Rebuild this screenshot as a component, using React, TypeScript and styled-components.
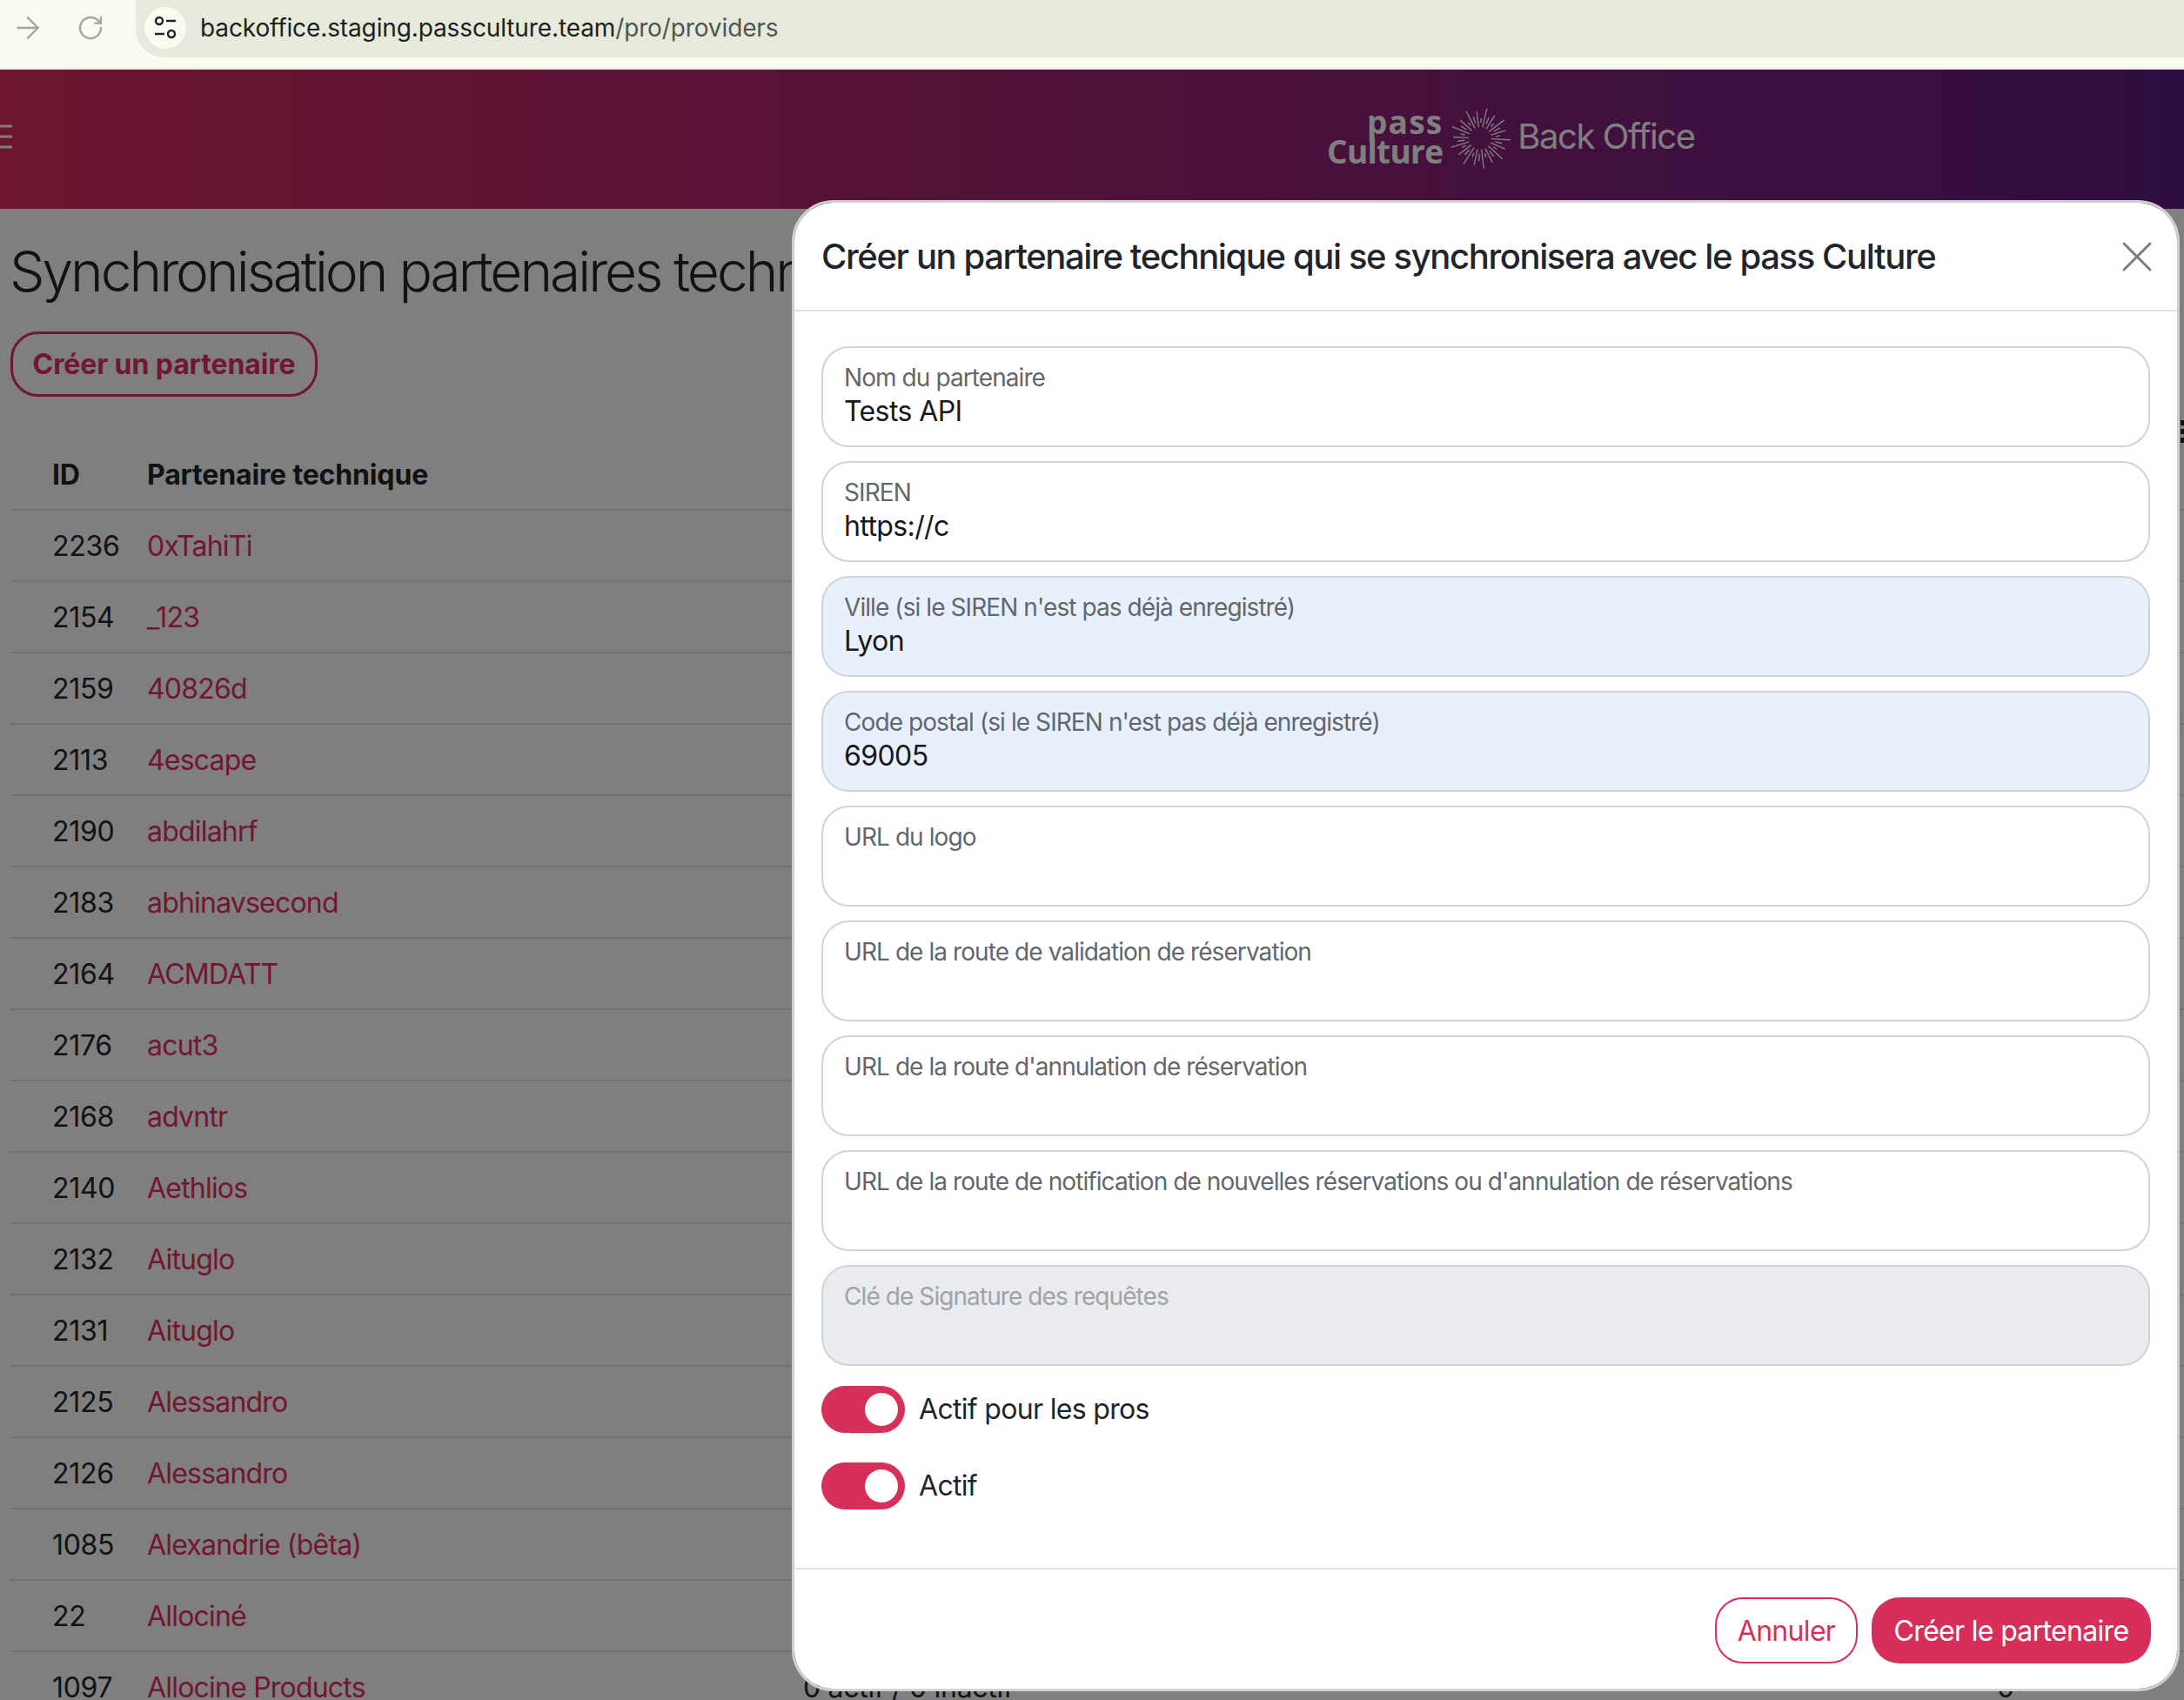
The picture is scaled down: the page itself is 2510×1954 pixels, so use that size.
import styled, { createGlobalStyle } from "styled-components";
import { ArrowRight, RotateCw, X } from "lucide-react";

const GlobalStyle = createGlobalStyle`
  html, body {
    margin: 0;
    padding: 0;
    background: #fff;
    font-family: Inter, "Liberation Sans", sans-serif;
    color: #212529;
  }
  * { box-sizing: border-box; }
`;

const providers = [
  { id: 2236, name: "0xTahiTi" },
  { id: 2154, name: "_123" },
  { id: 2159, name: "40826d" },
  { id: 2113, name: "4escape" },
  { id: 2190, name: "abdilahrf" },
  { id: 2183, name: "abhinavsecond" },
  { id: 2164, name: "ACMDATT" },
  { id: 2176, name: "acut3" },
  { id: 2168, name: "advntr" },
  { id: 2140, name: "Aethlios" },
  { id: 2132, name: "Aituglo" },
  { id: 2131, name: "Aituglo" },
  { id: 2125, name: "Alessandro" },
  { id: 2126, name: "Alessandro" },
  { id: 1085, name: "Alexandrie (bêta)" },
  { id: 22, name: "Allociné" },
  { id: 1097, name: "Allocine Products" },
];

const fields = [
  { label: "Nom du partenaire", value: "Tests API" },
  { label: "SIREN", value: "https://c" },
  { label: "Ville (si le SIREN n'est pas déjà enregistré)", value: "Lyon", autofilled: true },
  { label: "Code postal (si le SIREN n'est pas déjà enregistré)", value: "69005", autofilled: true },
  { label: "URL du logo", value: "" },
  { label: "URL de la route de validation de réservation", value: "" },
  { label: "URL de la route d'annulation de réservation", value: "" },
  { label: "URL de la route de notification de nouvelles réservations ou d'annulation de réservations", value: "" },
  { label: "Clé de Signature des requêtes", value: "", disabled: true },
];

const sunRays = Array.from({ length: 36 }, (_, i) => {
  const angle = (i / 36) * Math.PI * 2 + 0.05;
  const start = i % 2 === 0 ? 13 : 18;
  const end = [35, 26, 31, 23][i % 4];
  return {
    x1: 36 + Math.cos(angle) * start,
    y1: 36 + Math.sin(angle) * start,
    x2: 36 + Math.cos(angle) * end,
    y2: 36 + Math.sin(angle) * end,
  };
});

const App = () => {
  return (
    <Page>
      <GlobalStyle />
      <BrowserBar>
        <NavIcons>
          <ArrowRight size={40} strokeWidth={1.4} />
          <RotateCw size={32} strokeWidth={1.8} />
        </NavIcons>
        <AddressPill>
          <SiteBadge>
            <svg width="26" height="30" viewBox="0 0 26 30" fill="none" stroke="#222" strokeWidth="2.4">
              <circle cx="6" cy="7" r="4" />
              <path d="M14 7h11" />
              <path d="M1 22h11" />
              <circle cx="20" cy="22" r="4" />
            </svg>
          </SiteBadge>
          <AddressText>
            backoffice.staging.passculture.team<AddressPath>/pro/providers</AddressPath>
          </AddressText>
        </AddressPill>
      </BrowserBar>

      <Stage>
        <Header>
          <svg width="14" height="30" viewBox="0 0 14 30" stroke="#fff" strokeWidth="3">
            <path d="M0 3h14M0 15h14M0 27h14" />
          </svg>
          <Brand>
            <LogoWords>
              <LogoPass>pass</LogoPass>
              <LogoCulture>Culture</LogoCulture>
            </LogoWords>
            <SunMark width="72" height="72" viewBox="0 0 72 72" stroke="#fff" strokeWidth="1.4">
              {sunRays.map((ray, i) => (
                <line key={i} {...ray} />
              ))}
            </SunMark>
            <BrandTitle>Back Office</BrandTitle>
          </Brand>
        </Header>

        <Content>
          <Title>Synchronisation partenaires techniques</Title>
          <OutlineLink>Créer un partenaire</OutlineLink>
          <Table>
            <HeadRow>
              <span>ID</span>
              <span>Partenaire technique</span>
            </HeadRow>
            {providers.map((provider) => (
              <Row key={`${provider.id}`}>
                <span>{provider.id}</span>
                <ProviderLink>{provider.name}</ProviderLink>
                <span>0 actif / 0 inactif</span>
                <span>0</span>
              </Row>
            ))}
          </Table>
        </Content>

        <MenuDots width="4" height="26" viewBox="0 0 4 26" fill="#212529">
          <rect width="4" height="6" />
          <rect y="10" width="4" height="6" />
          <rect y="20" width="4" height="6" />
        </MenuDots>

        <Backdrop />

        <Modal>
          <ModalHeader>
            <ModalTitle>Créer un partenaire technique qui se synchronisera avec le pass Culture</ModalTitle>
            <CloseButton>
              <X size={60} strokeWidth={1.2} />
            </CloseButton>
          </ModalHeader>
          <ModalBody>
            {fields.map((field) => (
              <Field key={field.label} $autofilled={field.autofilled} $disabled={field.disabled}>
                <FieldLabel $disabled={field.disabled}>{field.label}</FieldLabel>
                <FieldValue>{field.value}</FieldValue>
              </Field>
            ))}
            <ToggleList>
              <ToggleRow>
                <Toggle />
                <ToggleText>Actif pour les pros</ToggleText>
              </ToggleRow>
              <ToggleRow>
                <Toggle />
                <ToggleText>Actif</ToggleText>
              </ToggleRow>
            </ToggleList>
          </ModalBody>
          <ModalFooter>
            <CancelButton>Annuler</CancelButton>
            <SubmitButton>Créer le partenaire</SubmitButton>
          </ModalFooter>
        </Modal>
      </Stage>
    </Page>
  );
};

const Page = styled.div`
  width: 2510px;
  height: 1954px;
  overflow: hidden;
  background: #fff;
`;

const BrowserBar = styled.div`
  height: 80px;
  display: flex;
  align-items: flex-start;
  background: #f8fbf2;
  border-bottom: 2px solid #e6ebde;
`;

const NavIcons = styled.div`
  width: 156px;
  height: 64px;
  flex-shrink: 0;
  padding-left: 12px;
  display: flex;
  align-items: center;
  gap: 36px;
  color: #a3a5a1;
`;

const AddressPill = styled.div`
  flex: 1;
  height: 66px;
  padding: 0 0 2px 10px;
  display: flex;
  align-items: center;
  gap: 16px;
  background: #e5eadc;
  border-radius: 0 0 0 33px;
`;

const SiteBadge = styled.div`
  width: 48px;
  height: 48px;
  border-radius: 50%;
  background: #f8fbf2;
  display: flex;
  align-items: center;
  justify-content: center;
`;

const AddressText = styled.div`
  font-size: 28px;
  letter-spacing: -0.12px;
  color: #1d1f1b;
  white-space: nowrap;
`;

const AddressPath = styled.span`
  color: #51554c;
`;

const Stage = styled.div`
  position: relative;
  height: 1874px;
  overflow: hidden;
`;

const Header = styled.header`
  height: 160px;
  padding-bottom: 6px;
  display: flex;
  align-items: center;
  background: linear-gradient(90deg, #dc2c60 0%, #601c86 100%);
`;

const Brand = styled.div`
  margin-left: 1511px;
  display: flex;
  align-items: center;
  gap: 7px;
  color: #fff;
`;

const LogoWords = styled.div`
  display: flex;
  flex-direction: column;
  align-items: flex-end;
  font-family: "Open Sans", sans-serif;
  font-weight: 700;
  font-size: 37px;
  line-height: 34px;
`;

const LogoPass = styled.span`
  letter-spacing: 1.2px;
`;

const LogoCulture = styled.span`
  letter-spacing: -0.7px;
`;

const SunMark = styled.svg`
  margin-top: 3px;
`;

const BrandTitle = styled.div`
  margin: -2px 0 0;
  font-size: 40px;
  font-weight: 400;
  letter-spacing: -1.45px;
  white-space: nowrap;
`;

const Content = styled.main`
  padding: 24px 0 0 12px;
`;

const Title = styled.h1`
  margin: 0 0 21px -1px;
  font-size: 64px;
  line-height: 96px;
  font-weight: 300;
  letter-spacing: -3px;
  color: #212529;
  white-space: nowrap;
`;

const OutlineLink = styled.div`
  width: 353px;
  height: 75px;
  display: flex;
  align-items: center;
  justify-content: center;
  border: 3px solid #e52d63;
  border-radius: 32px;
  color: #e52d63;
  font-size: 32px;
  font-weight: 700;
  letter-spacing: -0.1px;
`;

const Table = styled.div`
  margin-top: 49px;
  font-size: 32px;
  letter-spacing: -0.3px;
`;

const Row = styled.div`
  height: 82px;
  padding-left: 48px;
  display: grid;
  grid-template-columns: 109px 754px 1372px 1fr;
  align-items: center;
  border-bottom: 2px solid #dee2e6;
`;

const HeadRow = styled(Row)`
  font-weight: 700;
  letter-spacing: -0.15px;
`;

const ProviderLink = styled.span`
  color: #e52d63;
  letter-spacing: -0.8px;
`;

const MenuDots = styled.svg`
  position: absolute;
  top: 403px;
  right: 0;
`;

const Backdrop = styled.div`
  position: absolute;
  inset: 0;
  background: rgba(0, 0, 0, 0.5);
`;

const Modal = styled.div`
  position: absolute;
  top: 150px;
  left: 910px;
  width: 1595px;
  height: 1714px;
  display: flex;
  flex-direction: column;
  background: #fff;
  background-clip: padding-box;
  border: 3px solid #cfcfcf;
  border-radius: 48px;
`;

const ModalHeader = styled.div`
  height: 125px;
  flex-shrink: 0;
  padding: 0 31px;
  display: flex;
  align-items: center;
  justify-content: space-between;
  border-bottom: 2px solid #dee2e6;
`;

const ModalTitle = styled.h2`
  margin: 0;
  font-size: 40px;
  font-weight: 500;
  letter-spacing: -1.38px;
  color: #212529;
  white-space: nowrap;
`;

const CloseButton = styled.div`
  margin-right: -15px;
  display: flex;
  color: #7d7d7d;
`;

const ModalBody = styled.div`
  flex: 1;
  padding: 40px 31px 0;
  display: flex;
  flex-direction: column;
  gap: 16px;
`;

const Field = styled.div<{ $autofilled?: boolean; $disabled?: boolean }>`
  height: 116px;
  padding: 18px 24px 0;
  border: 2px solid #ced4da;
  border-radius: 32px;
  background: ${(p) => (p.$autofilled ? "#e8f0fe" : p.$disabled ? "#e9ebef" : "#fff")};
`;

const FieldLabel = styled.div<{ $disabled?: boolean }>`
  font-size: 28px;
  line-height: 32px;
  letter-spacing: -0.92px;
  color: ${(p) => (p.$disabled ? "#a0a3a6" : "#62676c")};
  white-space: nowrap;
`;

const FieldValue = styled.div`
  margin-top: 3px;
  font-size: 32px;
  line-height: 40px;
  letter-spacing: -0.6px;
  color: #16181a;
`;

const ToggleList = styled.div`
  margin-top: 7px;
  display: flex;
  flex-direction: column;
  gap: 34px;
`;

const ToggleRow = styled.div`
  height: 54px;
  display: flex;
  align-items: center;
  gap: 16px;
`;

const ToggleText = styled.span`
  margin-top: -2px;
  font-size: 32px;
  letter-spacing: -0.68px;
  color: #212529;
`;

const Toggle = styled.span`
  position: relative;
  width: 96px;
  height: 54px;
  border-radius: 27px;
  background: #d82f5a;

  &::after {
    content: "";
    position: absolute;
    top: 8px;
    right: 8px;
    width: 38px;
    height: 38px;
    border-radius: 50%;
    background: #fff;
  }
`;

const ModalFooter = styled.div`
  height: 139px;
  flex-shrink: 0;
  padding: 3px 30px 0;
  display: flex;
  align-items: center;
  justify-content: flex-end;
  gap: 16px;
  border-top: 2px solid #dee2e6;
  font-size: 32px;
  letter-spacing: -0.68px;
`;

const CancelButton = styled.div`
  width: 164px;
  height: 76px;
  display: flex;
  align-items: center;
  justify-content: center;
  border: 2px solid #d82f5a;
  border-radius: 32px;
  color: #d82f5a;
`;

const SubmitButton = styled.div`
  width: 321px;
  height: 76px;
  display: flex;
  align-items: center;
  justify-content: center;
  border-radius: 32px;
  background: #d82f5a;
  color: #fff;
`;

export default App;
